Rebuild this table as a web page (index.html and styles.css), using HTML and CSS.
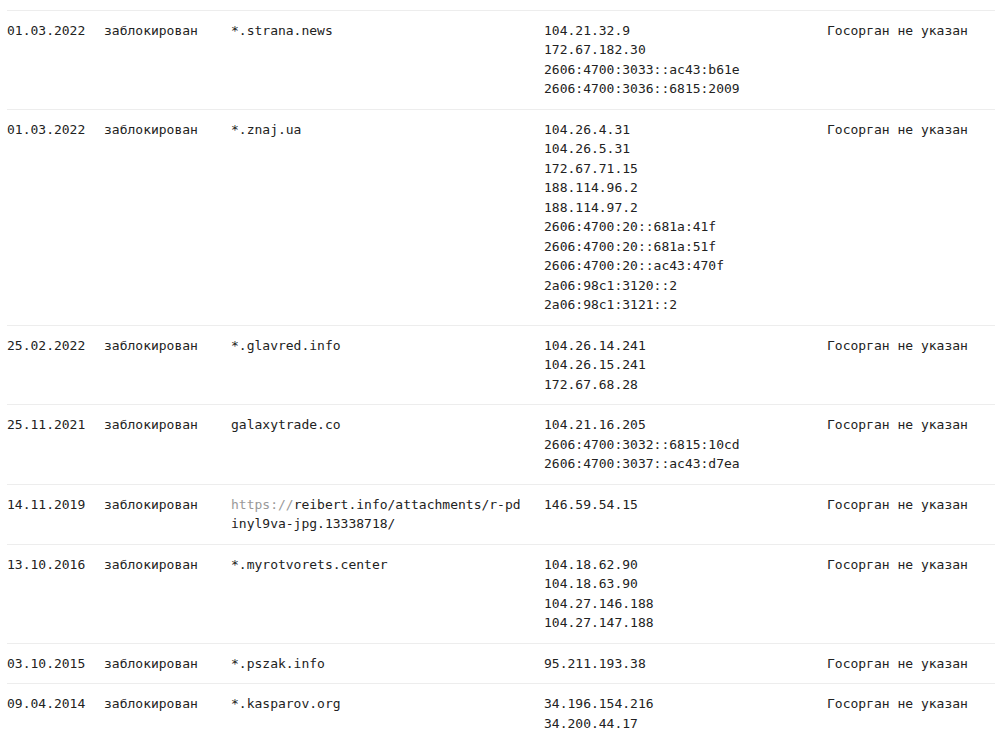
FILE: index.html
```html
<!DOCTYPE html>
<html lang="ru">
<head>
<meta charset="utf-8">
<title>Реестр</title>
<link rel="stylesheet" href="styles.css">
</head>
<body>
<div class="table">
  <div class="row">
    <div class="cell">01.03.2022</div>
    <div class="cell">заблокирован</div>
    <div class="cell domain">*.strana.news</div>
    <div class="cell ips"><div>104.21.32.9</div><div>172.67.182.30</div><div>2606:4700:3033::ac43:b61e</div><div>2606:4700:3036::6815:2009</div></div>
    <div class="cell">Госорган не указан</div>
  </div>
  <div class="row">
    <div class="cell">01.03.2022</div>
    <div class="cell">заблокирован</div>
    <div class="cell domain">*.znaj.ua</div>
    <div class="cell ips"><div>104.26.4.31</div><div>104.26.5.31</div><div>172.67.71.15</div><div>188.114.96.2</div><div>188.114.97.2</div><div>2606:4700:20::681a:41f</div><div>2606:4700:20::681a:51f</div><div>2606:4700:20::ac43:470f</div><div>2a06:98c1:3120::2</div><div>2a06:98c1:3121::2</div></div>
    <div class="cell">Госорган не указан</div>
  </div>
  <div class="row">
    <div class="cell">25.02.2022</div>
    <div class="cell">заблокирован</div>
    <div class="cell domain">*.glavred.info</div>
    <div class="cell ips"><div>104.26.14.241</div><div>104.26.15.241</div><div>172.67.68.28</div></div>
    <div class="cell">Госорган не указан</div>
  </div>
  <div class="row">
    <div class="cell">25.11.2021</div>
    <div class="cell">заблокирован</div>
    <div class="cell domain">galaxytrade.co</div>
    <div class="cell ips"><div>104.21.16.205</div><div>2606:4700:3032::6815:10cd</div><div>2606:4700:3037::ac43:d7ea</div></div>
    <div class="cell">Госорган не указан</div>
  </div>
  <div class="row">
    <div class="cell">14.11.2019</div>
    <div class="cell">заблокирован</div>
    <div class="cell domain"><span class="proto">https://</span>reibert.info/attachments/r-pdinyl9va-jpg.13338718/</div>
    <div class="cell ips"><div>146.59.54.15</div></div>
    <div class="cell">Госорган не указан</div>
  </div>
  <div class="row">
    <div class="cell">13.10.2016</div>
    <div class="cell">заблокирован</div>
    <div class="cell domain">*.myrotvorets.center</div>
    <div class="cell ips"><div>104.18.62.90</div><div>104.18.63.90</div><div>104.27.146.188</div><div>104.27.147.188</div></div>
    <div class="cell">Госорган не указан</div>
  </div>
  <div class="row">
    <div class="cell">03.10.2015</div>
    <div class="cell">заблокирован</div>
    <div class="cell domain">*.pszak.info</div>
    <div class="cell ips"><div>95.211.193.38</div></div>
    <div class="cell">Госорган не указан</div>
  </div>
  <div class="row">
    <div class="cell">09.04.2014</div>
    <div class="cell">заблокирован</div>
    <div class="cell domain">*.kasparov.org</div>
    <div class="cell ips"><div>34.196.154.216</div><div>34.200.44.17</div></div>
    <div class="cell">Госорган не указан</div>
  </div>
</div>
</body>
</html>
```

FILE: styles.css
```css
html, body {
  margin: 0;
  padding: 0;
  background: #fff;
}
body {
  font-family: "DejaVu Sans Mono", "Liberation Mono", monospace;
  font-size: 13px;
  line-height: 19.5px;
  color: #222;
}
.table {
  padding-top: 9.5px;
  margin-left: 7px;
}
.row {
  display: grid;
  grid-template-columns: 97px 127px 313px 283px 1fr;
  padding: 10px 0;
  border-top: 1px solid #ededed;
}
.cell {
  padding-right: 18px;
  white-space: nowrap;
}
.domain {
  white-space: normal;
  word-break: break-all;
}
.proto {
  color: #999;
}
```
